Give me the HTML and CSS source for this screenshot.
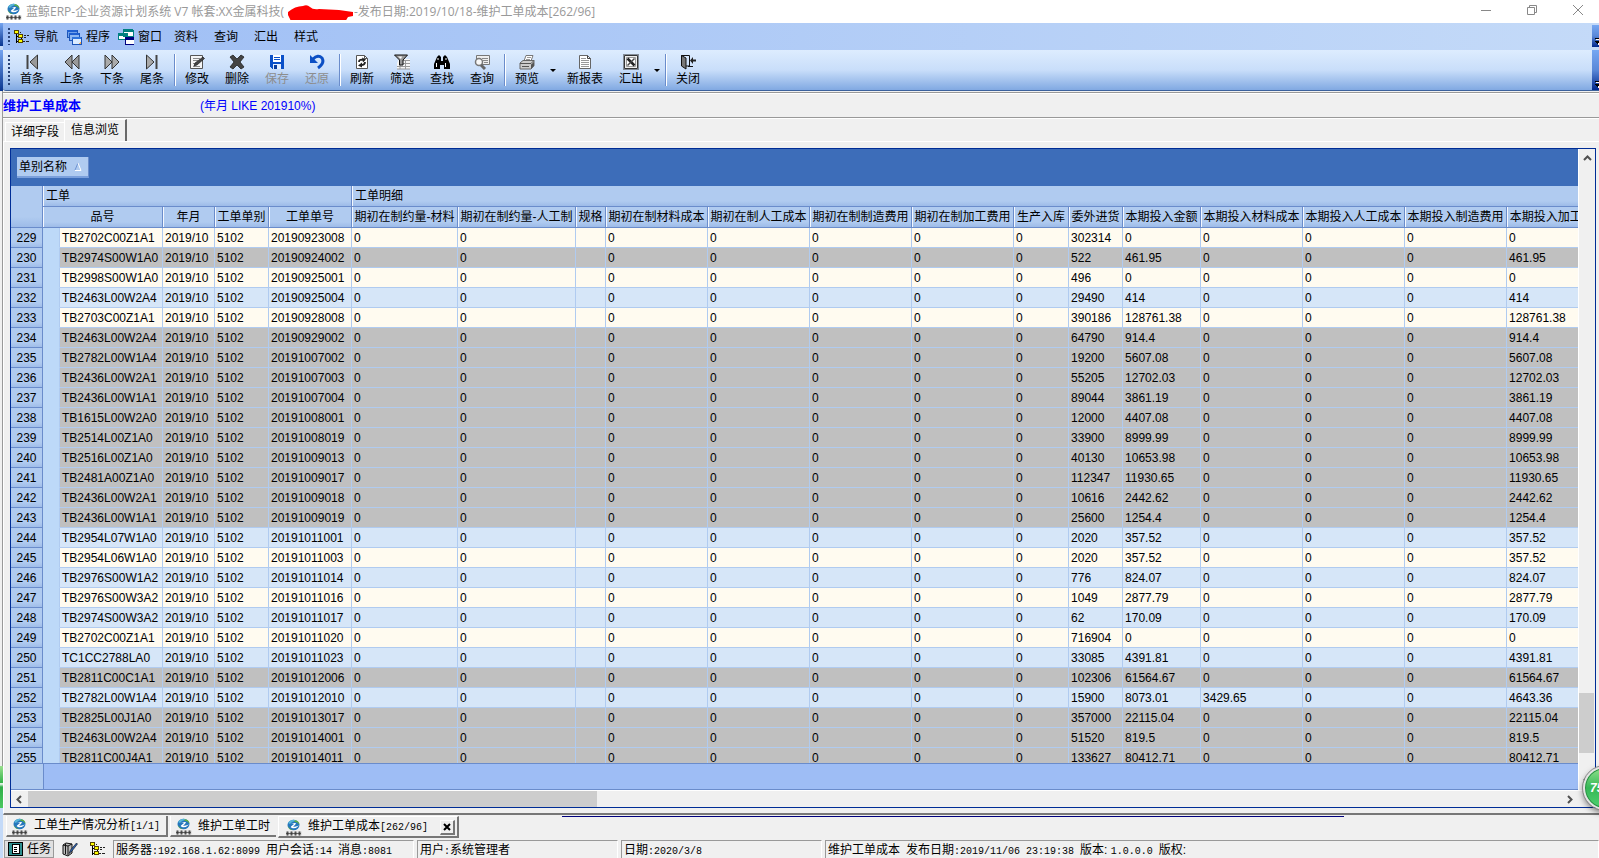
FILE: index.html
```html
<!DOCTYPE html>
<html lang="zh-CN">
<head>
    <meta charset="UTF-8">
    <meta name="viewport" content="width=device-width, initial-scale=1.0">
    <title>蓝鲸ERP-维护工单成本</title>
    <link rel="stylesheet" href="styles.css">
</head>
<body>
    <svg class="sprite" aria-hidden="true">
        <symbol id="logo" viewBox="0 0 17 17">
            <ellipse cx="8.500" cy="6" rx="6" ry="5.200" fill="#2577bd"/>
            <path d="M3 4a6 5 0 0 1 9-2.500Q7 2 5 5z" fill="#57b5d8"/>
            <path d="M10 1.200a6 5 0 0 1 4.500 4.500Q13 3 9 2.600zM2.500 6.500Q4 10 8 11 4 11.500 2.500 6.500z" fill="#62b33c"/>
            <path d="M5 5.500q3-2 6-1.500-.5 2-3 3.500 3 .5 6-1-3 3.500-7 2.500-2-.6-1-1.500l3-2.500q-2-.5-4 .5z" fill="#fff"/>
            <path d="M1 12.500h3.200v4H1zM5 12.500h3.200v4H5zM9 12.500h3.200v4H9zM13 12.500h3.200v4H13z" fill="#999"/>
            <path d="M1 14.500h15M2.500 12.500v4M6.500 12.500v4M10.500 12.500v4M14.500 12.500v4" stroke="#333" stroke-width=".7"/>
        </symbol>
        <symbol id="tree" viewBox="0 0 16 16" shape-rendering="crispEdges">
            <path d="M2 3v11M2 7h4M2 12h4M7 8v4" stroke="#000" fill="none"/>
            <path d="M0 1h4v3H0zM4 5h4v3H4zM4 10h4v3H4z" fill="#ff0" stroke="#554400"/>
            <path d="M6 3h1M10 6h2M13 6h2M10 8h2M9 12h2M12 12h3" stroke="#222" fill="none"/>
        </symbol>
        <symbol id="stack" viewBox="0 0 16 16" shape-rendering="crispEdges">
            <path d="M1 1h10v7H1z" fill="#6fa0ea" stroke="#1c55b8"/><path d="M1 1h10v2H1z" fill="#1f5fd0"/>
            <path d="M3 4h10v7H3z" fill="#8fb8f2" stroke="#1c55b8"/><path d="M3 4h10v2H3z" fill="#1f5fd0"/>
            <path d="M6 8h9v7H6z" fill="#dcecff" stroke="#1c55b8"/><path d="M6 8h9v2H6z" fill="#2f74dc"/>
            <path d="M12 15l3-3v3z" fill="#f4a950"/>
        </symbol>
        <symbol id="windows" viewBox="0 0 16 16" shape-rendering="crispEdges">
            <path d="M5 1h10v6H5zM0 4h9v6H0z" fill="#fff" stroke="#008080"/>
            <path d="M5 0h10v3H5zM0 4h9v3H0z" fill="#008080"/>
            <path d="M7 8h9v7H7z" fill="#fff" stroke="#000080"/><path d="M7 8h9v3H7z" fill="#000080"/>
        </symbol>
        <symbol id="first" viewBox="0 0 16 16">
            <path d="M3.500 1v14" stroke="#444" stroke-width="2"/><path d="M13.500 1v14L6 8z" fill="#999" stroke="#333"/>
        </symbol>
        <symbol id="prev" viewBox="0 0 16 16">
            <path d="M8 1v14L1 8zM15 1v14L8 8z" fill="#999" stroke="#333"/>
        </symbol>
        <symbol id="next" viewBox="0 0 16 16">
            <path d="M1 1v14l7-7zM8 1v14l7-7z" fill="#aaa" stroke="#333"/>
        </symbol>
        <symbol id="last" viewBox="0 0 16 16">
            <path d="M12.500 1v14" stroke="#444" stroke-width="2"/><path d="M2.500 1v14L10 8z" fill="#aaa" stroke="#333"/>
        </symbol>
        <symbol id="edit" viewBox="0 0 16 16">
            <path d="M1.500 1.500h12v13h-12z" fill="#f4f4f4" stroke="#555"/>
            <path d="M4 4.500h7M4 6.500h5M4 9.500h3M4 12.500h7" stroke="#888"/>
            <path d="M14 3l1.500 1.500L8 11l-3 1 1-3z" fill="#444" stroke="#111" stroke-width=".6"/>
        </symbol>
        <symbol id="delete" viewBox="0 0 16 16">
            <path d="M1 3l3-2 4 4 4-4 3 2-4 5 4 5-3 2-4-4-4 4-3-2 4-5z" fill="#444" stroke="#222" stroke-width=".8"/>
        </symbol>
        <symbol id="save" viewBox="0 0 16 16" shape-rendering="crispEdges">
            <path d="M1 1h14v14H3l-2-2z" fill="#0a50c8"/><path d="M4 1h8v7H4z" fill="#fff"/>
            <path d="M5 3h6M5 5h6" stroke="#0a50c8"/><path d="M4 10h8v5H4z" fill="#e6f0ff"/><path d="M5 11h3v4H5z" fill="#0a3c9c"/>
        </symbol>
        <symbol id="undo" viewBox="0 0 16 16">
            <path d="M4 5q5-5 9-1 3 5-4 10" fill="none" stroke="#0c4fc4" stroke-width="3"/>
            <path d="M1 1v8h8z" fill="#0c4fc4"/>
        </symbol>
        <symbol id="refresh" viewBox="0 0 16 16">
            <path d="M2.500 1.500h8l3 3v10h-11z" fill="#fff" stroke="#555"/><path d="M10.500 1.500v3h3" fill="none" stroke="#555"/>
            <path d="M5 8q0-3 4-2M11 8q0 3-4 3" fill="none" stroke="#222" stroke-width="1.800"/>
            <path d="M8 3.500l4 2-3 3zM8 8.500l-4 3 4 2z" fill="#222"/>
        </symbol>
        <symbol id="filter" viewBox="0 0 16 16">
            <path d="M5 5h11v10H3V9z" fill="#f6f6f6"/><path d="M9 6.500h7M9 9.500h7M3 12.500h13M3 15h13M11.500 6v9M6 11v4" stroke="#999"/>
            <path d="M.5 1h13L9 6v5H5.500V6z" fill="#999" stroke="#111"/><path d="M4 2.500h4L7 5z" fill="#fff"/>
        </symbol>
        <symbol id="find" viewBox="0 0 16 16">
            <path d="M3 3l2-2 2 2v4h2V3l2-2 2 2 3 7v5h-6v-4H6v4H0v-5z" fill="#000"/>
            <path d="M4 4v2M12 4v2M2.500 9v4M11.500 9v4" stroke="#fff"/>
        </symbol>
        <symbol id="query" viewBox="0 0 16 16">
            <path d="M2.500 1.500h13v9h-13z" fill="#eee" stroke="#777"/><path d="M8 4.500h6M9 6.500h5M10 8.500h4" stroke="#888"/>
            <circle cx="5" cy="8" r="3.500" fill="#f8f8f8" stroke="#777" stroke-width="1.500"/><path d="M7 11l4 4" stroke="#666" stroke-width="3"/>
        </symbol>
        <symbol id="print" viewBox="0 0 16 16">
            <path d="M5 7l2-5.500h7L12 7z" fill="#fff" stroke="#777"/><path d="M8 3.500h4M7 5.500h4" stroke="#999"/>
            <path d="M1 9l3-2.500h11v5L12 15H1z" fill="#ccc" stroke="#666"/><path d="M1 9.500h11l3-3M3 12.500h7" stroke="#555" fill="none"/>
            <path d="M12 10.500l3-2.500v4l-3 3z" fill="#555"/>
        </symbol>
        <symbol id="report" viewBox="0 0 16 16">
            <path d="M2.500 1.500h8l3 3v10h-11z" fill="#fff" stroke="#666"/><path d="M10.500 1.500v3h3" fill="none" stroke="#444"/>
            <path d="M4 4.500h5M4 6.500h8M4 8.500h8M4 10.500h8M4 12.500h8" stroke="#999"/>
        </symbol>
        <symbol id="excel" viewBox="0 0 16 16">
            <path d="M1.500 1.500h13v13h-13z" fill="#eee" stroke="#333"/>
            <path d="M.5.5h15v15H.5z" fill="none" stroke="#333" stroke-dasharray="1 1"/>
            <path d="M3.500 3.500h9v9h-9z" fill="#fff" stroke="#999"/>
            <path d="M4.500 4.500l7 7" stroke="#222" stroke-width="2.500"/><path d="M11.500 4.500l-7 7" stroke="#444" stroke-width="1.500"/>
        </symbol>
        <symbol id="exit" viewBox="0 0 16 16">
            <path d="M1.500 12V1.500h8V12H5" fill="none" stroke="#111"/><path d="M1.500 1.500L6 4v11l-4.500-3z" fill="#777" stroke="#111"/>
            <path d="M8 12.500h5" stroke="#111"/><path d="M10 6.500l3-3.500v2.500h3v2h-3V10z" fill="#222"/>
        </symbol>
        <symbol id="task" viewBox="0 0 16 16" shape-rendering="crispEdges">
            <path d="M1 1h14v13H1z" fill="#2f9090" stroke="#000"/><path d="M5 3h7v9H5z" fill="#fff" stroke="#000"/>
            <path d="M7 6h3M7 8h3M7 10h3" stroke="#000"/>
        </symbol>
        <symbol id="books" viewBox="0 0 16 16">
            <path d="M1 4l3-2 6 1v9l-4 3-5-2z" fill="#bbb" stroke="#111"/><path d="M3.500 3v10M6 5v9M1 4l5 1 4-2" stroke="#111" fill="none"/>
            <path d="M14.500 2L8.500 9 7 12.500 10 10l5.500-7z" fill="#2b62b4" stroke="#111" stroke-width=".6"/>
        </symbol>
        <symbol id="overflow" viewBox="0 0 7 8" shape-rendering="crispEdges">
            <path d="M3 1h4v1H3zM3 4h4v1H3zM4 5h3v1H4zM5 6h2v1H5z" fill="#000"/><path d="M4 2h3v1H4zM6 6h1v2H6z" fill="#fff"/>
        </symbol>
    </svg>

    <header class="titlebar">
        <svg class="icon logo"><use href="#logo"/></svg>
        <h1 class="window-title">蓝鲸ERP-企业资源计划系统 V7 帐套:XX金属科技(<svg class="redaction" viewBox="0 0 70 16"><path d="M4 8q7-6 15-6 4-2 7 1 3 3 9 2l20 1 14 2v4l-5 1-3 5-40 1-8-3-6 1-3-6z" fill="red"/></svg>-发布日期:2019/10/18-维护工单成本[262/96]</h1>
        <div class="window-buttons">
            <button aria-label="最小化"><svg viewBox="0 0 12 12"><path d="M1 6.500h10"/></svg></button>
            <button aria-label="还原窗口"><svg viewBox="0 0 12 12"><path d="M1.500 3.500h7v7h-7zM3.500 3.500v-2h7v7h-2"/></svg></button>
            <button aria-label="关闭窗口"><svg viewBox="0 0 12 12"><path d="M1 1l10 10M11 1L1 11"/></svg></button>
        </div>
    </header>

    <div class="workspace">
        <div class="gutter">
            <div class="gutter-menu"></div>
            <div class="gutter-tools"></div>
            <div class="gutter-page"></div>
            <div class="gutter-ball"></div>
        </div>

        <div class="client">
            <nav class="menubar">
                <span class="grip"></span>
                <button class="menu-item"><svg class="icon"><use href="#tree"/></svg>导航</button>
                <button class="menu-item"><svg class="icon"><use href="#stack"/></svg>程序</button>
                <button class="menu-item"><svg class="icon"><use href="#windows"/></svg>窗口</button>
                <button class="menu-item plain">资料</button>
                <button class="menu-item plain">查询</button>
                <button class="menu-item plain">汇出</button>
                <button class="menu-item plain">样式</button>
                <button class="more" aria-label="更多菜单"><svg><use href="#overflow"/></svg></button>
            </nav>

            <div class="toolbar">
                <span class="grip"></span>
                <button class="tool"><svg class="icon"><use href="#first"/></svg>首条</button>
                <button class="tool"><svg class="icon"><use href="#prev"/></svg>上条</button>
                <button class="tool"><svg class="icon"><use href="#next"/></svg>下条</button>
                <button class="tool"><svg class="icon"><use href="#last"/></svg>尾条</button>
                <span class="sep"></span>
                <button class="tool"><svg class="icon"><use href="#edit"/></svg>修改</button>
                <button class="tool"><svg class="icon"><use href="#delete"/></svg>删除</button>
                <button class="tool" disabled><svg class="icon"><use href="#save"/></svg>保存</button>
                <button class="tool" disabled><svg class="icon"><use href="#undo"/></svg>还原</button>
                <span class="sep"></span>
                <button class="tool"><svg class="icon"><use href="#refresh"/></svg>刷新</button>
                <button class="tool"><svg class="icon"><use href="#filter"/></svg>筛选</button>
                <button class="tool"><svg class="icon"><use href="#find"/></svg>查找</button>
                <button class="tool"><svg class="icon"><use href="#query"/></svg>查询</button>
                <span class="sep"></span>
                <button class="tool"><svg class="icon"><use href="#print"/></svg>预览</button>
                <button class="drop" aria-label="预览选项"></button>
                <button class="tool wide"><svg class="icon"><use href="#report"/></svg>新报表</button>
                <button class="tool"><svg class="icon"><use href="#excel"/></svg>汇出</button>
                <button class="drop" aria-label="汇出选项"></button>
                <span class="sep"></span>
                <button class="tool"><svg class="icon"><use href="#exit"/></svg>关闭</button>
                <button class="more" aria-label="更多工具"><svg><use href="#overflow"/></svg></button>
            </div>

            <div class="caption">
                <h2>维护工单成本</h2>
                <span class="condition">(年月 LIKE 201910%)</span>
            </div>

            <div class="tabs">
                <button class="tab">详细字段</button>
                <button class="tab active">信息浏览</button>
            </div>

            <main class="page">
                <div class="grid">
                    <div class="grid-main">
                        <div class="group-panel">
                            <button class="group-field">单别名称
                                <svg viewBox="0 0 8 9"><path d="M4 1L1 8" stroke="#6f94d4" fill="none"/><path d="M4 1l3 7.500H1" stroke="#fff" fill="none"/></svg>
                            </button>
                        </div>
                        <div class="grid-rows">
                            <table>
                                <colgroup>
                                    <col class="c-head"><col class="c-indent"><col class="c-code"><col class="c-month"><col class="c-type"><col class="c-order">
                                    <col class="c-est"><col class="c-labor"><col class="c-spec">
                                    <col class="c-cost"><col class="c-cost"><col class="c-cost"><col class="c-cost">
                                    <col class="c-in"><col class="c-out"><col class="c-amount">
                                    <col class="c-cost"><col class="c-cost"><col class="c-cost"><col class="c-cost">
                                </colgroup>
                                <thead>
                                    <tr class="bands">
                                        <th rowspan="2" class="corner"></th>
                                        <th colspan="5">工单</th>
                                        <th colspan="14">工单明细</th>
                                    </tr>
                                    <tr class="columns">
                                        <th colspan="2">品号</th>
                                        <th>年月</th>
                                        <th>工单单别</th>
                                        <th>工单单号</th>
                                        <th>期初在制约量-材料</th>
                                        <th>期初在制约量-人工制</th>
                                        <th>规格</th>
                                        <th>期初在制材料成本</th>
                                        <th>期初在制人工成本</th>
                                        <th>期初在制制造费用</th>
                                        <th>期初在制加工费用</th>
                                        <th>生产入库</th>
                                        <th>委外进货</th>
                                        <th>本期投入金额</th>
                                        <th>本期投入材料成本</th>
                                        <th>本期投入人工成本</th>
                                        <th>本期投入制造费用</th>
                                        <th>本期投入加工费用</th>
                                    </tr>
                                </thead>
                                <tbody id="rows"></tbody>
                            </table>
                        </div>
                        <div class="grid-footer"><span></span></div>
                    </div>
                    <div class="vscroll">
                        <svg viewBox="0 0 9 6"><path d="M1 5l3.500-3.500L8 5"/></svg>
                        <div class="track"><div class="thumb"></div></div>
                        <svg viewBox="0 0 9 6"><path d="M1 1l3.500 3.500L8 1"/></svg>
                    </div>
                    <div class="hscroll">
                        <svg viewBox="0 0 6 9"><path d="M5 1L1.500 4.500 5 8"/></svg>
                        <div class="track"><div class="thumb"></div></div>
                        <svg viewBox="0 0 6 9"><path d="M1 1l3.500 3.500L1 8"/></svg>
                    </div>
                </div>
            </main>

            <nav class="taskbar">
                <div class="splash-line"></div>
                <button class="task"><svg class="icon logo"><use href="#logo"/></svg><span>工单生产情况分析<span class="mono">[1/1]</span></span></button>
                <button class="task flat"><svg class="icon logo"><use href="#logo"/></svg><span>维护工单工时</span></button>
                <div class="task active">
                    <svg class="icon logo"><use href="#logo"/></svg><span>维护工单成本<span class="mono">[262/96]</span></span>
                    <button class="task-close" aria-label="关闭页签"><svg viewBox="0 0 8 8"><path d="M1 1l6 6M7 1L1 7"/></svg></button>
                </div>
            </nav>

            <footer class="statusbar">
                <button class="status-task"><svg class="icon"><use href="#task"/></svg>任务</button>
                <button class="status-icon" aria-label="日志"><svg class="icon"><use href="#books"/></svg></button>
                <button class="status-icon" aria-label="导航树"><svg class="icon"><use href="#tree"/></svg></button>
                <span class="status server">服务器<span class="mono">:192.168.1.62:8099 </span>用户会话<span class="mono">:14 </span>消息<span class="mono">:8081</span></span>
                <span class="status user">用户<span class="mono">:</span>系统管理者</span>
                <span class="status date">日期<span class="mono">:2020/3/8</span></span>
                <span class="status version">维护工单成本<span class="mono"> </span>发布日期<span class="mono">:2019/11/06 23:19:38 </span>版本: <span class="mono">1.0.0.0 </span>版权:</span>
            </footer>
        </div>
    </div>

    <div class="ball">75</div>

    <script>
        // no, 品号, 工单单号, 委外进货, 本期投入金额, 材料成本, 加工费用, row colour
        const rows = [
            [229, 'TB2702C00Z1A1', '20190923008', '302314', '0', '0', '0', 'cream'],
            [230, 'TB2974S00W1A0', '20190924002', '522', '461.95', '0', '461.95', 'gray'],
            [231, 'TB2998S00W1A0', '20190925001', '496', '0', '0', '0', 'cream'],
            [232, 'TB2463L00W2A4', '20190925004', '29490', '414', '0', '414', 'blue'],
            [233, 'TB2703C00Z1A1', '20190928008', '390186', '128761.38', '0', '128761.38', 'cream'],
            [234, 'TB2463L00W2A4', '20190929002', '64790', '914.4', '0', '914.4', 'gray'],
            [235, 'TB2782L00W1A4', '20191007002', '19200', '5607.08', '0', '5607.08', 'gray'],
            [236, 'TB2436L00W2A1', '20191007003', '55205', '12702.03', '0', '12702.03', 'gray'],
            [237, 'TB2436L00W1A1', '20191007004', '89044', '3861.19', '0', '3861.19', 'gray'],
            [238, 'TB1615L00W2A0', '20191008001', '12000', '4407.08', '0', '4407.08', 'gray'],
            [239, 'TB2514L00Z1A0', '20191008019', '33900', '8999.99', '0', '8999.99', 'gray'],
            [240, 'TB2516L00Z1A0', '20191009013', '40130', '10653.98', '0', '10653.98', 'gray'],
            [241, 'TB2481A00Z1A0', '20191009017', '112347', '11930.65', '0', '11930.65', 'gray'],
            [242, 'TB2436L00W2A1', '20191009018', '10616', '2442.62', '0', '2442.62', 'gray'],
            [243, 'TB2436L00W1A1', '20191009019', '25600', '1254.4', '0', '1254.4', 'gray'],
            [244, 'TB2954L07W1A0', '20191011001', '2020', '357.52', '0', '357.52', 'blue'],
            [245, 'TB2954L06W1A0', '20191011003', '2020', '357.52', '0', '357.52', 'cream'],
            [246, 'TB2976S00W1A2', '20191011014', '776', '824.07', '0', '824.07', 'blue'],
            [247, 'TB2976S00W3A2', '20191011016', '1049', '2877.79', '0', '2877.79', 'cream'],
            [248, 'TB2974S00W3A2', '20191011017', '62', '170.09', '0', '170.09', 'blue'],
            [249, 'TB2702C00Z1A1', '20191011020', '716904', '0', '0', '0', 'cream'],
            [250, 'TC1CC2788LA0', '20191011023', '33085', '4391.81', '0', '4391.81', 'blue'],
            [251, 'TB2811C00C1A1', '20191012006', '102306', '61564.67', '0', '61564.67', 'gray'],
            [252, 'TB2782L00W1A4', '20191012010', '15900', '8073.01', '3429.65', '4643.36', 'blue'],
            [253, 'TB2825L00J1A0', '20191013017', '357000', '22115.04', '0', '22115.04', 'gray'],
            [254, 'TB2463L00W2A4', '20191014001', '51520', '819.5', '0', '819.5', 'gray'],
            [255, 'TB2811C00J4A1', '20191014011', '133627', '80412.71', '0', '80412.71', 'gray']
        ];

        const tbody = document.getElementById('rows');

        rows.forEach(function ([no, code, order, out, amount, material, process, color]) {
            const cells = [code, '2019/10', '5102', order, 0, 0, '', 0, 0, 0, 0, 0, out, amount, material, 0, 0, process];
            const row = tbody.insertRow();
            row.className = color;
            row.innerHTML = `<th scope="row">${no}</th><td class="indent"></td>` +
                cells.map(value => `<td>${value}</td>`).join('');
        });
    </script>
</body>
</html>
```
FILE: styles.css
```css
* {
    box-sizing: border-box;
}

body {
    margin: 0;
    height: 100vh;
    display: flex;
    flex-direction: column;
    overflow: hidden;
    background: #f0f0f0;
    color: #000;
    font-family: "Liberation Sans", "Noto Sans CJK SC", sans-serif;
    font-size: 12px;
    line-height: 16px;
}

button {
    margin: 0;
    padding: 0;
    border: none;
    background: none;
    color: inherit;
    font: inherit;
    white-space: nowrap;
}

h1, h2 {
    margin: 0;
    font-size: 12px;
}

.sprite {
    position: absolute;
    width: 0;
    height: 0;
}

.icon {
    width: 16px;
    height: 16px;
    flex: none;
}

.logo {
    width: 17px;
    height: 17px;
}

.mono {
    font-family: "Liberation Mono", monospace;
    font-size: 10px;
    white-space: pre;
}

/* title bar */
.titlebar {
    flex: none;
    height: 23px;
    display: flex;
    align-items: center;
    gap: 4px;
    padding-left: 5px;
    background: #fff;
    color: #999;
}

.window-title {
    flex: 1;
    display: flex;
    align-items: center;
    font-family: "Open Sans", "Noto Sans CJK SC", sans-serif;
    font-weight: normal;
    white-space: pre;
}

.redaction {
    width: 70px;
    height: 16px;
}

.window-buttons {
    display: flex;
    margin-right: -2px;
}

.window-buttons button {
    width: 46px;
    height: 20px;
}

.window-buttons svg {
    width: 12px;
    height: 12px;
    fill: none;
    stroke: #888;
}

/* strip left of the client area */
.workspace {
    flex: 1;
    min-height: 0;
    display: flex;
}

.gutter {
    width: 3px;
    flex: none;
    display: flex;
    flex-direction: column;
    gap: 4px;
    background: #c4daf8;
}

.gutter-menu {
    height: 23px;
    background: linear-gradient(#74a4f0, #0a3690);
}

.gutter-tools {
    height: 41px;
    background: linear-gradient(#74a4f0, #0a3690);
}

.gutter-page {
    flex: 1;
    margin-top: -4px;
    background: #f0f0f0;
    border-right: 1px solid #999;
}

.gutter-ball {
    height: 42px;
    margin-top: -4px;
    margin-bottom: 50px;
    background: linear-gradient(#9be08f, #35b44a 40%, #fff 42%, #2fae48 50%, #4cc860);
}

.client {
    flex: 1;
    min-width: 0;
    display: flex;
    flex-direction: column;
    background: #f0f0f0;
}

/* menu */
.menubar {
    flex: none;
    height: 27px;
    display: flex;
    align-items: center;
    padding-left: 5px;
    background: linear-gradient(90deg, #9ebef5, #c4daf8);
}

.grip {
    flex: none;
    width: 2px;
    height: 17px;
    background: repeating-linear-gradient(#274176 0 2px, transparent 2px 4px);
}

.menu-item {
    display: flex;
    align-items: center;
    gap: 4px;
    padding: 0 4px;
}

.menu-item.plain {
    padding: 0 8px;
}

.more {
    align-self: stretch;
    width: 7px;
    margin-left: auto;
    display: flex;
    align-items: flex-end;
    padding-bottom: 2px;
    background: linear-gradient(#76a7f2, #5a88d8 50%, #00268c);
}

.menubar .more {
    margin-top: 2px;
    margin-bottom: 3px;
}

.more svg {
    width: 7px;
    height: 8px;
}

/* toolbar */
.toolbar {
    flex: none;
    height: 41px;
    display: flex;
    align-items: center;
    padding-left: 5px;
    border-bottom: 1px solid #3b619c;
    border-radius: 3px 0 0 3px;
    background: linear-gradient(#ddecfe, #c9defa 50%, #81a9e2);
}

.toolbar .grip {
    height: 31px;
    margin-right: 2px;
}

.tool {
    width: 40px;
    display: flex;
    flex-direction: column;
    align-items: center;
    gap: 1px;
    padding-top: 1px;
}

.tool.wide {
    width: 52px;
}

.tool:disabled {
    color: #8d8d8d;
}

.sep {
    width: 2px;
    height: 32px;
    margin: 0 1px 0 2px;
    background: linear-gradient(90deg, #6a8ccb 50%, #fff 50%);
}

.drop {
    width: 12px;
    height: 32px;
    display: flex;
    align-items: center;
    justify-content: center;
}

.drop::after {
    content: "";
    border: 3px solid transparent;
    border-top-color: #000;
    border-bottom: none;
}

/* caption */
.caption {
    flex: none;
    height: 26px;
    margin-top: 1px;
    padding-top: 1px;
    display: flex;
    align-items: center;
    gap: 119px;
    border-top: 1px solid #999;
    border-bottom: 1px solid #999;
    box-shadow: inset 0 1px #fff, 0 1px #fff;
    color: #00f;
}

.caption h2 {
    font-size: 13px;
}

/* tabs */
.tabs {
    flex: none;
    display: flex;
    align-items: flex-end;
    height: 23px;
    padding-left: 2px;
}

.tab {
    height: 19px;
    padding: 0 5px;
    border-top: 1px solid #fff;
    border-left: 1px solid #fff;
}

.tab.active {
    height: 22px;
    padding: 0 6px 2px;
    border-right: 2px solid #696969;
}

/* grid */
.page {
    flex: 1;
    min-height: 0;
    display: flex;
    padding: 6px 3px 5px 6px;
    border-top: 1px solid #fff;
    border-left: 1px solid #fff;
    border-bottom: 2px solid #777;
}

.grid {
    flex: 1;
    min-width: 0;
    display: grid;
    grid-template-columns: minmax(0, 1fr) 17px;
    grid-template-rows: minmax(0, 1fr) 17px;
    border: 1px solid #002d96;
}

.grid-main {
    min-height: 0;
    display: flex;
    flex-direction: column;
}

.group-panel {
    flex: none;
    height: 37px;
    padding: 8px 6px;
    background: #3d6db9;
}

.group-field {
    width: 72px;
    height: 21px;
    display: flex;
    align-items: center;
    justify-content: space-between;
    padding: 0 6px 0 2px;
    border-right: 1px solid #6a8ccb;
    border-bottom: 2px solid #7ba0dc;
    background: #b0cbf0;
}

.group-field svg {
    width: 8px;
    height: 9px;
}

.grid-rows {
    flex: 1;
    min-height: 0;
    overflow: hidden;
    background: #bdd9f8;
}

table {
    width: 0;
    min-width: 100%;
    table-layout: fixed;
    border-collapse: separate;
    border-spacing: 0;
}

.c-head { width: 32px; }
.c-indent { width: 17px; }
.c-code { width: 103px; }
.c-month { width: 52px; }
.c-type { width: 54px; }
.c-order { width: 83px; }
.c-est { width: 106px; }
.c-labor { width: 118px; }
.c-spec { width: 30px; }
.c-cost { width: 102px; }
.c-in { width: 55px; }
.c-out { width: 54px; }
.c-amount { width: 78px; }

th, td {
    height: 20px;
    padding: 0 0 0 2px;
    overflow: hidden;
    font-weight: normal;
    line-height: 16px;
    text-align: left;
    white-space: nowrap;
}

thead th {
    height: 21px;
    border-right: 1px solid #6a8ccb;
    border-bottom: 1px solid #6a8ccb;
    background: linear-gradient(#b0cbf0 75%, #9dbbe8);
    box-shadow: inset 1px 0 #f4f8ff;
}

.bands th {
    padding-left: 3px;
}

.columns th {
    padding: 0;
    text-align: center;
}

.corner {
    box-shadow: none;
}

tbody th {
    padding: 0;
    border-right: 1px solid #6a8ccb;
    border-bottom: 1px solid #6a8ccb;
    background: linear-gradient(#b0cbf0 75%, #a0bde9);
    text-align: center;
}

td {
    border-right: 1px solid #b0cbf0;
    border-bottom: 1px solid #b0cbf0;
}

.cream td { background: #fffbf0; }
.blue td { background: #d6e6f8; }
.gray td { background: #c0c0c0; }

tbody .indent {
    border-bottom-color: #bdd9f8;
    background: #bdd9f8;
}

.grid-footer {
    flex: none;
    height: 27px;
    border-top: 1px solid #6a8ccb;
    border-bottom: 1px solid #6a8ccb;
    background: #9ebdf5;
}

.grid-footer span {
    display: block;
    width: 33px;
    height: 100%;
    border-right: 1px solid #6a8ccb;
    background: #b0cbf0;
}

/* scrollbars */
.vscroll, .hscroll {
    display: flex;
    align-items: center;
    background: #f0f0f0;
}

.vscroll {
    flex-direction: column;
    padding: 6px 0;
    border-left: 1px solid #fff;
}

.hscroll {
    grid-column: 1 / 3;
    padding: 0 22px 0 5px;
    border-top: 1px solid #fff;
}

.vscroll svg {
    width: 9px;
    height: 6px;
}

.hscroll svg {
    width: 6px;
    height: 9px;
}

.vscroll svg, .hscroll svg {
    flex: none;
    fill: none;
    stroke: #505050;
    stroke-width: 2;
}

.track {
    flex: 1;
    align-self: stretch;
    display: flex;
}

.thumb {
    background: #cdcdcd;
}

.vscroll .track {
    align-items: flex-end;
    padding-bottom: 25px;
}

.vscroll .thumb {
    width: 15px;
    height: 60px;
}

.hscroll .track {
    padding-left: 6px;
}

.hscroll .thumb {
    width: 37%;
}

/* window tabs */
.taskbar {
    position: relative;
    flex: none;
    height: 25px;
    display: flex;
    align-items: flex-start;
    gap: 2px;
    padding: 1px 3px 0;
}

.splash-line {
    position: absolute;
    top: 1px;
    left: 35%;
    right: 16%;
    height: 1px;
    background: #00007c;
}

.task {
    height: 21px;
    display: flex;
    align-items: center;
    gap: 6px;
    padding: 1px 6px 0 4px;
    border-left: 1px solid #fff;
    border-bottom: 2px solid #777;
    border-right: 2px solid #777;
}

.task.flat {
    border-right: none;
}

.task.active {
    height: 22px;
    padding-left: 6px;
    border-top: 1px solid #fff;
}

.task-close {
    width: 15px;
    height: 15px;
    margin: 0 -4px 0 6px;
    display: flex;
    align-items: center;
    justify-content: center;
    border: 1px solid #fff;
    border-right: 2px solid #777;
    border-bottom: 2px solid #777;
}

.task-close svg {
    width: 8px;
    height: 8px;
    stroke: #000;
    stroke-width: 2;
}

/* status bar */
.statusbar {
    flex: none;
    height: 18px;
    display: flex;
    gap: 3px;
    padding-left: 1px;
    white-space: nowrap;
}

.status-task {
    width: 50px;
    display: flex;
    align-items: center;
    gap: 4px;
    padding-left: 2px;
    border: 1px solid #999;
    background: #e0e0e0;
}

.status-icon {
    width: 25px;
    display: flex;
    align-items: center;
    justify-content: center;
}

.status {
    padding: 1px 2px 0;
    border-top: 1px solid #999;
    border-left: 1px solid #999;
    border-right: 1px solid #fff;
}

.server { width: 301px; }
.user { width: 201px; }
.date { width: 201px; }
.version { flex: 1; }

/* desktop ball over the right edge */
.ball {
    position: absolute;
    right: -28px;
    bottom: 48px;
    width: 44px;
    height: 44px;
    padding-left: 5px;
    border: 2px solid #e4e4e4;
    border-radius: 50%;
    outline: 1px solid #888;
    background: linear-gradient(#8fe08a, #35b856 50%, #4fd070);
    box-shadow: inset 0 0 0 1px #2b8f45, 0 3px 6px rgba(0, 0, 0, 0.5);
    color: #fff;
    font-style: italic;
    font-weight: bold;
    line-height: 40px;
}
```
